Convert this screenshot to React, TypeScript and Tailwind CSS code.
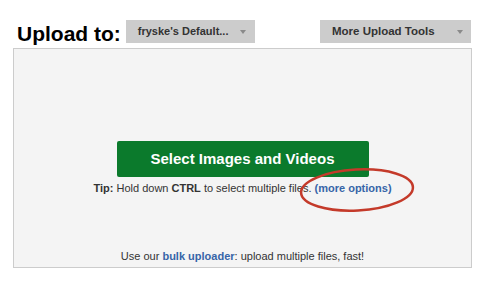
import React from 'react';

function Caret() {
  return (
    <svg width="6" height="4" viewBox="0 0 6 4" className="shrink-0">
      <polygon points="0,0 6,0 3,4" fill="#8a8a8a" />
    </svg>
  );
}

export default function App() {
  return (
    <div className="relative w-[485px] h-[283px] bg-white font-['Liberation_Sans',Arial,sans-serif] text-[#333]">
      <div className="px-[13px] pt-[20px]">
        {/* Header */}
        <div className="flex items-start h-[23px]">
          <span className="ml-[4px] mt-[2px] h-[23px] leading-[23px] text-[21px] font-bold text-black whitespace-nowrap">
            Upload to:
          </span>
          <button className="ml-[5px] w-[129px] h-[23px] bg-[#cccccc] flex items-center justify-between pl-[12px] pr-[9px]">
            <span className="text-[11px] font-bold text-[#333] whitespace-nowrap">fryske's Default...</span>
            <Caret />
          </button>
          <div className="flex-1" />
          <button className="mr-[1px] w-[151px] h-[23px] bg-[#cccccc] flex items-center justify-between pl-[12px] pr-[8px]">
            <span className="text-[11.5px] font-bold text-[#333] whitespace-nowrap">More Upload Tools</span>
            <Caret />
          </button>
        </div>

        {/* Upload box */}
        <div className="mt-[5px] h-[220px] border border-[#cccccc] bg-[#f4f4f4] flex flex-col items-center pt-[92px] pb-[4px]">
          <button className="w-[252px] h-[36px] rounded-[2px] bg-[#0b7a2c] text-white text-[15px] font-bold">
            Select Images and Videos
          </button>
          <p className="mt-[5px] text-[11px] leading-[13px] whitespace-nowrap">
            <b>Tip:</b> Hold down <b>CTRL</b> to select multiple files. <b className="text-[#3765a8]">(more options)</b>
          </p>
          <p className="mt-auto text-[11px] leading-[13px] whitespace-nowrap">
            Use our <b className="text-[#3765a8]">bulk uploader</b>: upload multiple files, fast!
          </p>
        </div>
      </div>

      {/* red circle annotation */}
      <svg className="absolute left-0 top-0 pointer-events-none" width="485" height="283">
        <ellipse cx="357" cy="190" rx="56" ry="20.5" fill="none" stroke="#c43a2a" strokeWidth="2.5" transform="rotate(-3 357 190)" />
      </svg>
    </div>
  );
}
